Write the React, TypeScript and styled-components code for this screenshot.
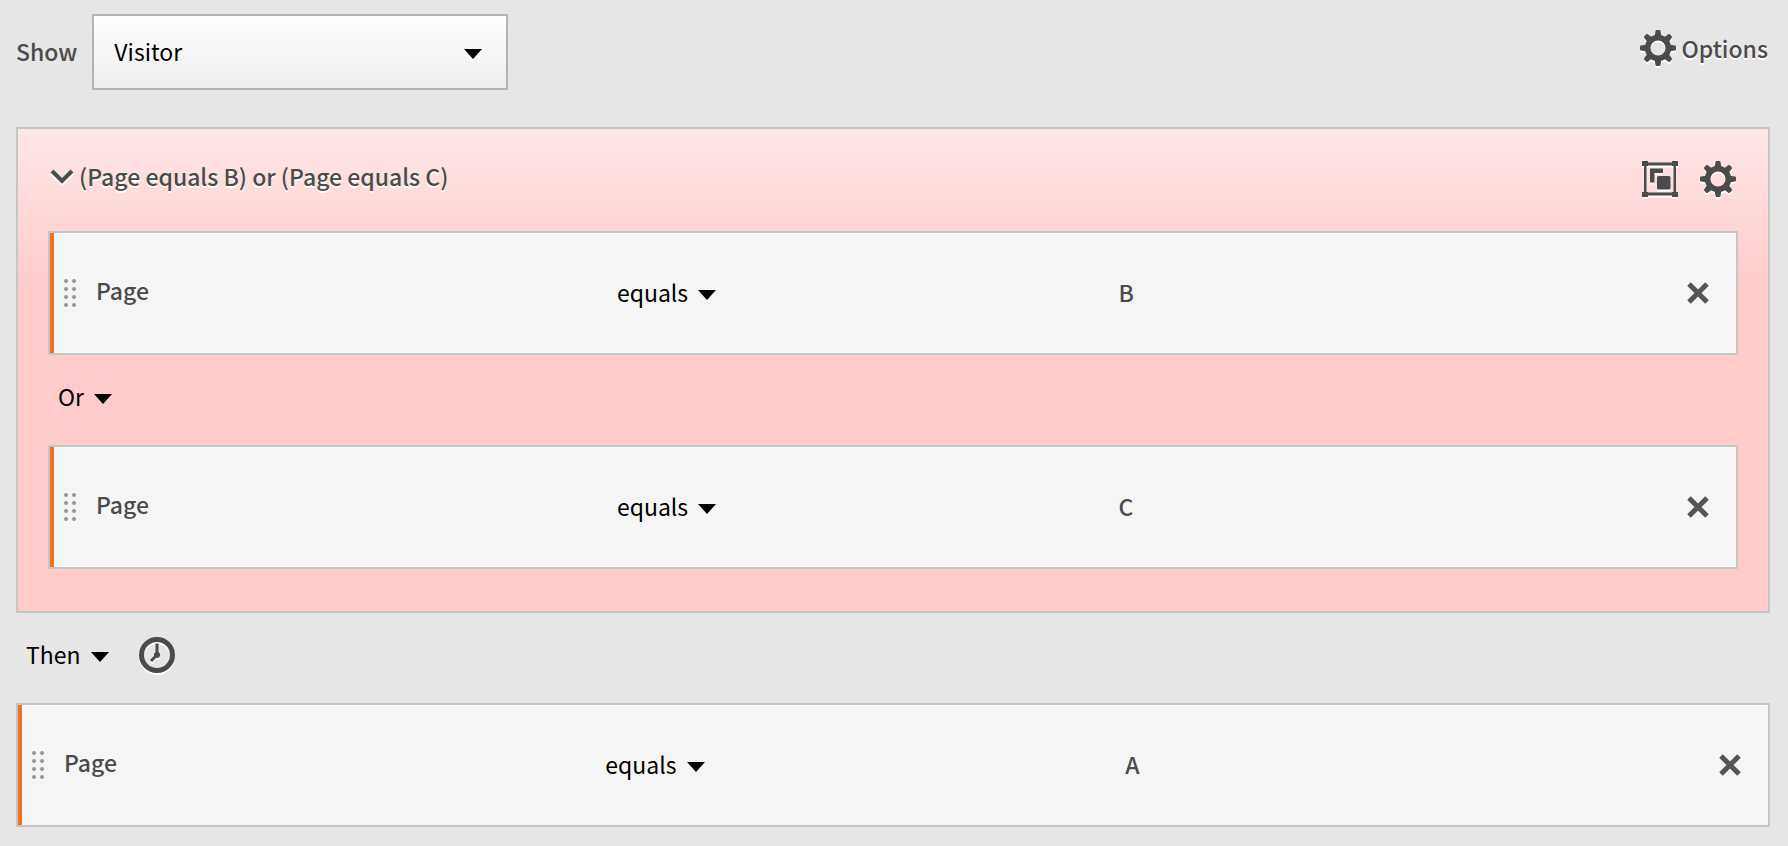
import React from 'react';
import styled, { createGlobalStyle } from 'styled-components';

const GlobalStyle = createGlobalStyle`
  *, *::before, *::after { box-sizing: border-box; }
  body {
    margin: 0;
    background: #e6e6e6;
    color: #4b4b4b;
    font-family: 'Noto Sans CJK SC', 'Open Sans', sans-serif;
    font-size: 23px;
    font-weight: 500;
    line-height: 32px;
  }
  button, select { font: inherit; color: inherit; }
`;

const Page = styled.main`
  padding: 14px 18px 18px 16px;
`;

const TopBar = styled.header`
  display: flex;
  align-items: flex-start;
  justify-content: space-between;
  padding-bottom: 37px;
`;

const ShowField = styled.div`
  display: flex;
  align-items: center;
  gap: 15px;
`;

const ShowLabel = styled.label`
  padding-bottom: 2px;
`;

const SelectWrap = styled.div`
  display: grid;
  align-items: center;
  justify-items: end;
`;

const ContainerSelect = styled.select`
  grid-area: 1 / 1;
  width: 416px;
  height: 76px;
  padding: 0 20px 2px;
  border: 2px solid #b4b4b4;
  border-radius: 0;
  appearance: none;
  background: linear-gradient(#fff, #eee);
  color: #000;
  font-weight: 400;
`;

const Caret = styled.svg`
  grid-area: 1 / 1;
  width: 18px;
  height: 10px;
  margin-top: 4px;
  fill: #000;
  pointer-events: none;
`;

const BoxCaret = styled(Caret)`
  margin-right: 26px;
`;

const IconButton = styled.button`
  display: flex;
  align-items: center;
  gap: 5px;
  padding: 0;
  border: 0;
  background: none;
  text-shadow: 0 2px 0 #fff;
`;

const OptionsButton = styled(IconButton)`
  margin-top: 16px;
  padding-right: 2px;
`;

const Icon = styled.svg`
  display: block;
  width: 36px;
  height: 36px;
  fill: #4b4b4b;
  filter: drop-shadow(0 2px 0 #fff);
`;

const Group = styled.section`
  padding: 0 30px 42px;
  border: 2px solid #c6c6c6;
  background: linear-gradient(#ffe6e6, #ffcbcb 162px);
`;

const GroupHeader = styled.div`
  display: flex;
  align-items: center;
  justify-content: space-between;
  height: 102px;
  padding-bottom: 8px;
`;

const GroupTitle = styled(IconButton)`
  padding-left: 2px;
`;

const Chevron = styled.svg`
  width: 24px;
  height: 16px;
  fill: none;
  stroke: #4b4b4b;
  stroke-width: 4;
  filter: drop-shadow(0 2px 0 #fff);
`;

const GroupActions = styled.div`
  display: flex;
  gap: 22px;
  padding: 6px 2px 0 0;
`;

const RuleBox = styled.div`
  display: grid;
  grid-template-columns: 32px 318fr 288fr 394fr;
  align-items: center;
  height: 124px;
  padding: 0 27px 0 14px;
  border: 2px solid #c6c6c6;
  background: #f5f5f5;
  box-shadow: inset 4px 0 #f37029;
`;

const Handle = styled.svg`
  width: 12px;
  height: 28px;
  fill: #959595;
`;

const Dimension = styled.span`
  padding-bottom: 6px;
`;

const ValueCell = styled.div`
  display: flex;
  align-items: center;
  justify-content: space-between;
  padding-left: 45px;
`;

const Value = styled.span`
  padding-bottom: 2px;
`;

const CloseIcon = styled.svg`
  display: block;
  width: 22px;
  height: 22px;
  stroke: #555;
  stroke-width: 5;
`;

const MenuWrap = styled.div<{ $inset?: number }>`
  display: inline-grid;
  align-items: center;
  justify-items: end;
  justify-self: start;
  margin-left: ${({ $inset = 0 }) => $inset}px;
`;

const MenuSelect = styled.select`
  grid-area: 1 / 1;
  field-sizing: content;
  height: 34px;
  padding: 0 28px 2px 0;
  border: 0;
  appearance: none;
  background: none;
  color: #000;
  font-weight: 400;
`;

const Connector = styled.div`
  display: flex;
  align-items: center;
  gap: 30px;
  height: 90px;
  padding: 0 10px 6px;
`;

const caretPoints = <polygon points="0,0 18,0 9,10" />;

const Gear = () => (
  <Icon viewBox="0 0 36 36" aria-hidden="true">
    {[0, 45, 90, 135, 180, 225, 270, 315].map((angle) => (
      <path key={angle} d="M14.500 8 L15.500 1 Q15.700 0 16.600 0 H19.400 Q20.300 0 20.500 1 L21.500 8 Z" transform={`rotate(${angle} 18 18)`} />
    ))}
    <path
      fillRule="evenodd"
      d="M18 4.800a13.200 13.200 0 1 0 0 26.400a13.200 13.200 0 1 0 0-26.400z M18 10.400a7.600 7.600 0 1 1 0 15.200a7.600 7.600 0 1 1 0-15.200z"
    />
  </Icon>
);

const GroupIcon = () => (
  <Icon viewBox="0 0 36 36" aria-hidden="true">
    <path d="M0 0h6v5H0zM30 0h6v5h-6zM0 31h6v5H0zM30 31h6v5h-6z" />
    <path fillRule="evenodd" d="M2 1.500h32v33H2z M4.500 4.500v27h27v-27z" />
    <path d="M8 7.500h12q1 0 1 1V12h-8.500v9.500H9q-1 0-1-1z" />
    <rect x="15" y="15" width="13.500" height="13.500" rx="1.500" />
  </Icon>
);

const Clock = () => (
  <Icon viewBox="0 0 36 36" aria-hidden="true">
    <circle cx="18" cy="18" r="15.500" fill="none" stroke="#4b4b4b" strokeWidth="5" />
    <path d="M18 6.500V18L12 24" fill="none" stroke="#4b4b4b" strokeWidth="3" />
    <circle cx="18" cy="18" r="3" />
  </Icon>
);

interface MenuProps {
  label: string;
  options: string[];
  inset?: number;
}

const Menu = ({ label, options, inset }: MenuProps) => (
  <MenuWrap $inset={inset}>
    <MenuSelect aria-label={label} defaultValue={options[0]}>
      {options.map((option) => (
        <option key={option}>{option}</option>
      ))}
    </MenuSelect>
    <Caret viewBox="0 0 18 10" aria-hidden="true">{caretPoints}</Caret>
  </MenuWrap>
);

const Rule = ({ value }: { value: string }) => (
  <RuleBox>
    <Handle viewBox="0 0 12 28" aria-hidden="true">
      {[2, 10, 18, 26].map((y) => (
        <React.Fragment key={y}>
          <circle cx="2" cy={y} r="2" />
          <circle cx="10" cy={y} r="2" />
        </React.Fragment>
      ))}
    </Handle>
    <Dimension>Page</Dimension>
    <Menu label="Operator" options={['equals', 'contains']} inset={8} />
    <ValueCell>
      <Value>{value}</Value>
      <IconButton type="button" aria-label="Remove rule">
        <CloseIcon viewBox="0 0 22 22" aria-hidden="true">
          <path d="M2 2L20 20M20 2L2 20" />
        </CloseIcon>
      </IconButton>
    </ValueCell>
  </RuleBox>
);

export default function App() {
  return (
    <>
      <GlobalStyle />
      <Page>
        <TopBar>
          <ShowField>
            <ShowLabel htmlFor="container">Show</ShowLabel>
            <SelectWrap>
              <ContainerSelect id="container" defaultValue="Visitor">
                <option>Visitor</option>
                <option>Visit</option>
                <option>Hit</option>
              </ContainerSelect>
              <BoxCaret viewBox="0 0 18 10" aria-hidden="true">{caretPoints}</BoxCaret>
            </SelectWrap>
          </ShowField>
          <OptionsButton type="button">
            <Gear />
            Options
          </OptionsButton>
        </TopBar>

        <Group>
          <GroupHeader>
            <GroupTitle type="button" aria-expanded="true">
              <Chevron viewBox="0 0 24 16" aria-hidden="true">
                <path d="M2 3L12 13L22 3" />
              </Chevron>
              (Page equals B) or (Page equals C)
            </GroupTitle>
            <GroupActions>
              <IconButton type="button" aria-label="Group">
                <GroupIcon />
              </IconButton>
              <IconButton type="button" aria-label="Group settings">
                <Gear />
              </IconButton>
            </GroupActions>
          </GroupHeader>
          <Rule value="B" />
          <Connector>
            <Menu label="Operator between rules" options={['Or', 'And', 'Then']} />
          </Connector>
          <Rule value="C" />
        </Group>

        <Connector>
          <Menu label="Sequence" options={['Then', 'And', 'Or']} />
          <IconButton type="button" aria-label="Time constraint">
            <Clock />
          </IconButton>
        </Connector>
        <Rule value="A" />
      </Page>
    </>
  );
}
